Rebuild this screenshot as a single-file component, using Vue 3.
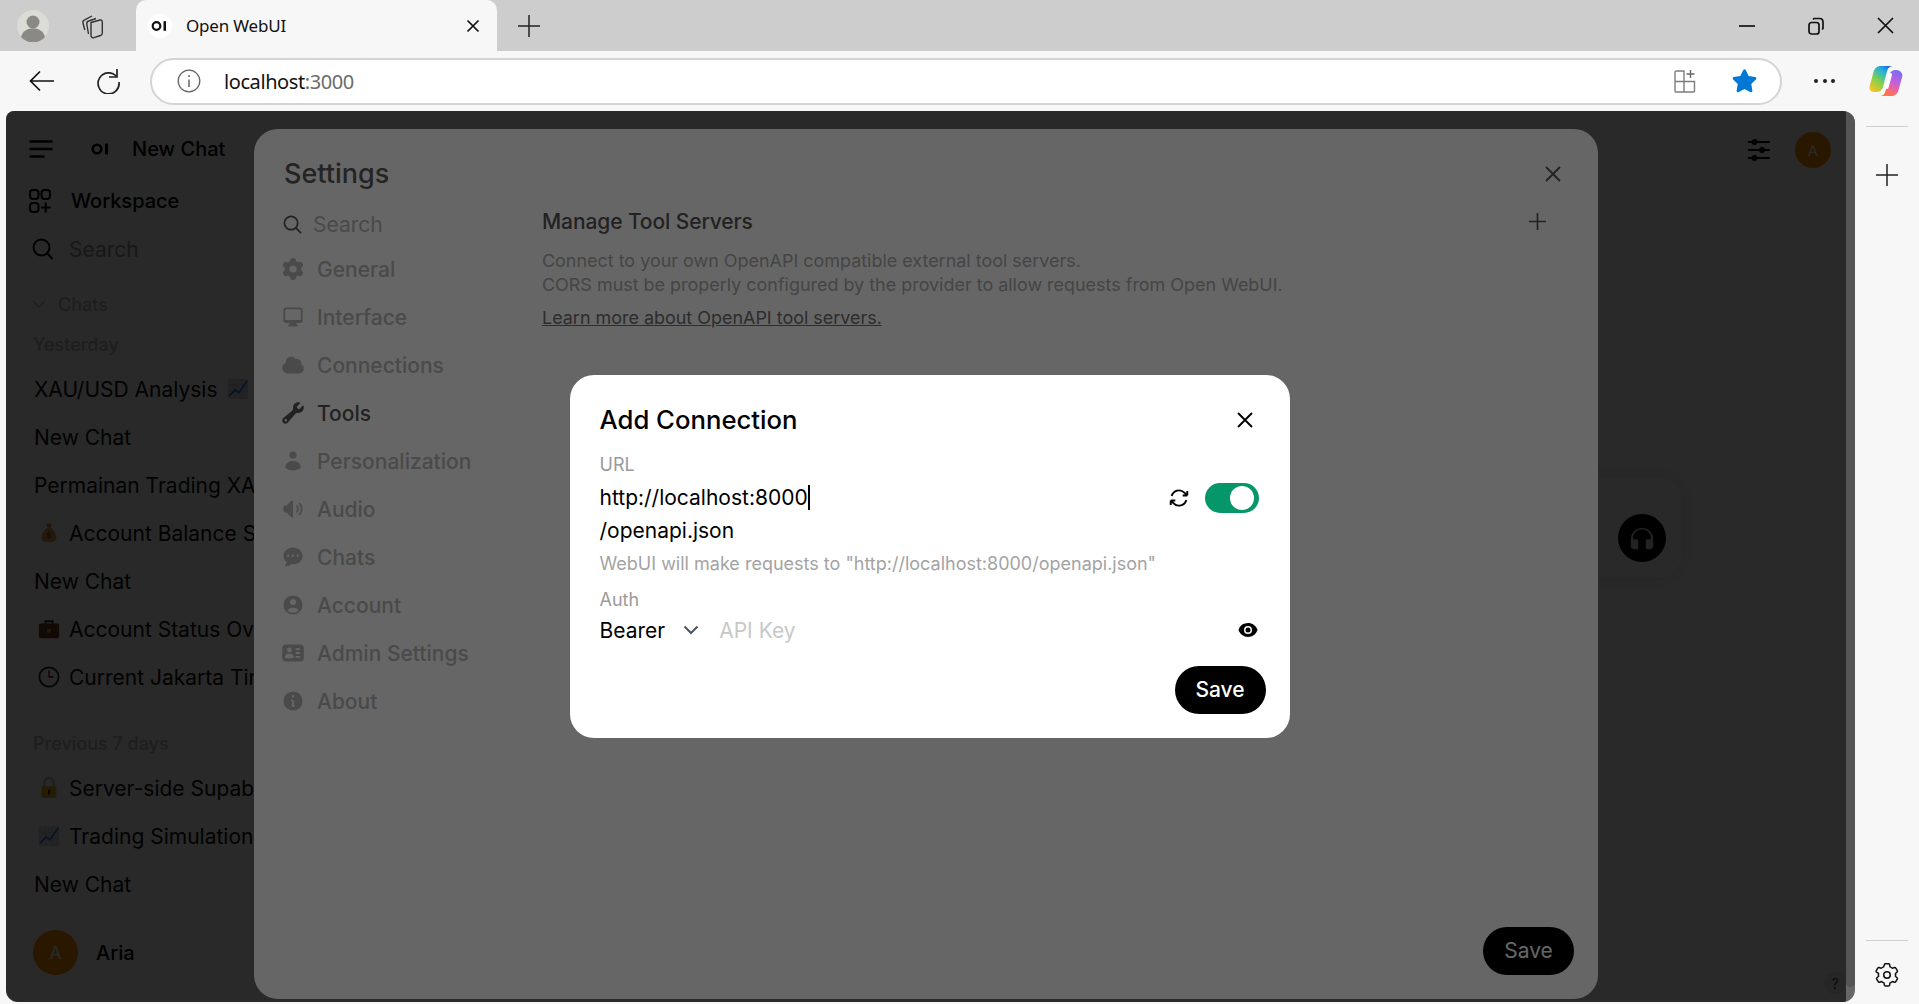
<script setup>
const nav = [
  { label: 'General', d: 'M7.84 1.804A1 1 0 0 1 8.82 1h2.36a1 1 0 0 1 .98.804l.331 1.652a6.993 6.993 0 0 1 1.929 1.115l1.598-.54a1 1 0 0 1 1.186.447l1.18 2.044a1 1 0 0 1-.205 1.251l-1.267 1.113a7.047 7.047 0 0 1 0 2.228l1.267 1.113a1 1 0 0 1 .206 1.25l-1.18 2.045a1 1 0 0 1-1.187.447l-1.598-.54a6.993 6.993 0 0 1-1.929 1.115l-.33 1.652a1 1 0 0 1-.98.804H8.82a1 1 0 0 1-.98-.804l-.331-1.652a6.993 6.993 0 0 1-1.929-1.115l-1.598.54a1 1 0 0 1-1.186-.447l-1.18-2.044a1 1 0 0 1 .205-1.251l1.267-1.114a7.05 7.05 0 0 1 0-2.227L1.821 7.773a1 1 0 0 1-.206-1.25l1.18-2.045a1 1 0 0 1 1.187-.447l1.598.54A6.992 6.992 0 0 1 7.51 3.456l.33-1.652ZM10 13a3 3 0 1 0 0-6 3 3 0 0 0 0 6Z' },
  { label: 'Interface', d: 'M2 4.25A2.25 2.25 0 0 1 4.25 2h11.5A2.25 2.25 0 0 1 18 4.25v8.5A2.25 2.25 0 0 1 15.75 15h-3.105a3.501 3.501 0 0 0 1.1 1.677A.75.75 0 0 1 13.26 18H6.74a.75.75 0 0 1-.484-1.323A3.501 3.501 0 0 0 7.355 15H4.25A2.25 2.25 0 0 1 2 12.75v-8.5Zm1.5 0a.75.75 0 0 1 .75-.75h11.5a.75.75 0 0 1 .75.75v7.5a.75.75 0 0 1-.75.75H4.25a.75.75 0 0 1-.75-.75v-7.5Z' },
  { label: 'Connections', d: 'M1 12.5A4.5 4.5 0 0 0 5.5 17H15a4 4 0 0 0 1.866-7.539 3.504 3.504 0 0 0-4.504-4.272A4.5 4.5 0 0 0 4.06 8.235 4.502 4.502 0 0 0 1 12.5Z' },
  { label: 'Tools', active: true, d: 'M19 5.5a4.5 4.5 0 0 1-4.791 4.49c-.873-.055-1.808.128-2.368.8l-6.024 7.23a2.724 2.724 0 1 1-3.837-3.837L9.21 8.16c.672-.56.855-1.495.8-2.368a4.5 4.5 0 0 1 5.873-4.575c.324.105.39.51.15.752L13.34 4.66a.455.455 0 0 0-.11.494 3.01 3.01 0 0 0 1.617 1.617c.17.07.363.02.493-.111l2.692-2.692c.241-.241.647-.174.752.15.14.435.216.9.216 1.382ZM4 17a1 1 0 1 0 0-2 1 1 0 0 0 0 2Z' },
  { label: 'Personalization', d: 'M10 8a3 3 0 1 0 0-6 3 3 0 0 0 0 6ZM3.465 14.493a1.23 1.23 0 0 0 .41 1.412A9.957 9.957 0 0 0 10 18c2.31 0 4.438-.784 6.131-2.1.43-.333.604-.903.408-1.41a7.002 7.002 0 0 0-13.074.003Z' },
  { label: 'Audio', d: 'M10 3.75a.75.75 0 0 0-1.264-.546L4.703 7H3.167a.75.75 0 0 0-.7.48A6.985 6.985 0 0 0 2 10c0 .887.165 1.737.468 2.52.111.29.39.48.7.48h1.535l4.033 3.796A.75.75 0 0 0 10 16.25V3.75ZM15.95 5.05a.75.75 0 0 0-1.06 1.061 5.5 5.5 0 0 1 0 7.778.75.75 0 0 0 1.06 1.06 7 7 0 0 0 0-9.899Z M13.829 7.172a.75.75 0 0 0-1.061 1.06 2.5 2.5 0 0 1 0 3.536.75.75 0 0 0 1.06 1.06 4 4 0 0 0 0-5.656Z' },
  { label: 'Chats', d: 'M10 2c-4.418 0-8 3.134-8 7 0 2.104 1.08 3.985 2.753 5.27a6.2 6.2 0 0 1-1.13 2.2.75.75 0 0 0 .62 1.2c1.7-.08 3.2-.7 4.4-1.7.44.07.9.1 1.36.1 4.418 0 8-3.134 8-7s-3.582-7-8-7ZM6 8a1 1 0 1 0 0 2a1 1 0 1 0 0-2ZM10 8a1 1 0 1 0 0 2a1 1 0 1 0 0-2ZM14 8a1 1 0 1 0 0 2a1 1 0 1 0 0-2Z' },
  { label: 'Account', d: 'M18 10a8 8 0 1 1-16 0 8 8 0 0 1 16 0Zm-5.5-2.5a2.5 2.5 0 1 1-5 0 2.5 2.5 0 0 1 5 0ZM10 12a5.99 5.99 0 0 0-4.793 2.39A6.483 6.483 0 0 0 10 16.5a6.483 6.483 0 0 0 4.793-2.11A5.99 5.99 0 0 0 10 12Z' },
  { label: 'Admin Settings', d: 'M1 6a3 3 0 0 1 3-3h12a3 3 0 0 1 3 3v8a3 3 0 0 1-3 3H4a3 3 0 0 1-3-3V6Zm4 1.5a2 2 0 1 1 4 0 2 2 0 0 1-4 0Zm2 3a4 4 0 0 0-3.665 2.395.75.75 0 0 0 .416 1A8.98 8.98 0 0 0 7 14.5a8.98 8.98 0 0 0 3.249-.604.75.75 0 0 0 .416-1.001A4.001 4.001 0 0 0 7 10.5Zm5-3.75a.75.75 0 0 1 .75-.75h2.5a.75.75 0 0 1 0 1.5h-2.5a.75.75 0 0 1-.75-.75Zm0 6.5a.75.75 0 0 1 .75-.75h2.5a.75.75 0 0 1 0 1.5h-2.5a.75.75 0 0 1-.75-.75Zm.75-4a.75.75 0 0 0 0 1.5h2.5a.75.75 0 0 0 0-1.5h-2.5Z' },
  { label: 'About', d: 'M18 10a8 8 0 1 1-16 0 8 8 0 0 1 16 0Zm-7-4a1 1 0 1 1-2 0 1 1 0 0 1 2 0ZM9 9a.75.75 0 0 0 0 1.5h.253a.25.25 0 0 1 .244.304l-.459 2.066A1.75 1.75 0 0 0 10.747 15H11a.75.75 0 0 0 0-1.5h-.253a.25.25 0 0 1-.244-.304l.459-2.066A1.75 1.75 0 0 0 9.253 9H9Z' },
]
const yesterday = [
  { t: 'XAU/USD Analysis', after: 'chart' },
  { t: 'New Chat' },
  { t: 'Permainan Trading XAU/USD' },
  { t: 'Account Balance Summary', e: 'bag' },
  { t: 'New Chat' },
  { t: 'Account Status Overview', e: 'case' },
  { t: 'Current Jakarta Time', e: 'clock' },
]
const week = [
  { t: 'Server-side Supabase Auth', e: 'lock' },
  { t: 'Trading Simulation Setup', e: 'chart' },
  { t: 'New Chat' },
]
</script>

<template>
  <div class="browser">
    <header class="tabstrip">
      <div class="profile">
        <svg width="32" height="32" viewBox="0 0 32 32"><circle cx="16" cy="16" r="16" fill="#dcdcd6"/><circle cx="16" cy="12" r="6.5" fill="#8b8985"/><path d="M4 27c2-7 7-8.500 12-8.500S26 20 28 27a16 16 0 0 1-24 0Z" fill="#8b8985"/></svg>
      </div>
      <div class="collections">
        <svg width="26" height="26" viewBox="0 0 26 26" fill="none" stroke="#333" stroke-width="1.400"><path d="M11 9.500 20 7c1.300-.3 2.300.5 2.300 1.800V20c0 1.200-.7 2.100-1.800 2.500L14 24.700c-1.500.5-3-.5-3-2.100V9.500Z"/><path d="M8.500 21 6.800 11c-.2-1.500.5-2.600 1.900-3L16 5.500"/><path d="M4.800 17 3 10c-.4-1.500.3-2.700 1.700-3.200L12 3"/></svg>
      </div>
      <div class="tab">
        <span class="favicon">
          <svg width="18" height="10" viewBox="0 0 18 10"><circle cx="5.500" cy="5" r="3.800" fill="none" stroke="#111" stroke-width="2.200"/><rect x="12.500" y="0.200" width="2.500" height="9.600" fill="#111"/></svg>
        </span>
        <span class="tab-title">Open WebUI</span>
        <svg class="tab-x" width="14" height="14" viewBox="0 0 14 14" stroke="#111" stroke-width="1.700"><path d="M1.500 1.500l11 11M12.500 1.500l-11 11"/></svg>
      </div>
      <svg class="new-tab" width="22" height="22" viewBox="0 0 22 22" stroke="#222" stroke-width="1.500"><path d="M11 0v22M0 11h22"/></svg>
      <div class="winbtns">
        <svg width="16" height="16" viewBox="0 0 16 16" stroke="#111" stroke-width="1.700"><path d="M0 8h16"/></svg>
        <svg width="16" height="18" viewBox="0 0 16 18" fill="none" stroke="#111" stroke-width="1.700"><rect x="1" y="5.500" width="10" height="11.500" rx="2.500"/><path d="M5 2.500 6 1.500h5.500c2 0 3.500 1.500 3.500 3.500v6.500l-1 1"/></svg>
        <svg width="17" height="17" viewBox="0 0 17 17" stroke="#111" stroke-width="1.700"><path d="M1 1l15 15M16 1L1 16"/></svg>
      </div>
    </header>

    <div class="toolbar">
      <svg class="tool-back" width="26" height="22" viewBox="0 0 26 22" fill="none" stroke="#111" stroke-width="1.700"><path d="M25 11H2M11 1.500 1.500 11l9.500 9.500"/></svg>
      <svg class="tool-reload" width="26" height="26" viewBox="0 0 26 26" fill="none" stroke="#222" stroke-width="1.700"><path d="M21.500 8.500A10.500 10.500 0 1 0 24 14"/><path d="M22 1v8h-8"/></svg>
      <div class="omnibox">
        <svg class="info" width="24" height="24" viewBox="0 0 24 24" fill="none" stroke="#666" stroke-width="1.300"><circle cx="12" cy="12" r="10.800"/><path d="M12 10.500v7.500" stroke-width="1.500"/><circle cx="12" cy="7" r="1" fill="#666" stroke="none"/></svg>
        <span class="addr">localhost<span class="addr-dim">:3000</span></span>
        <svg class="apps" width="24" height="24" viewBox="0 0 24 24" fill="none" stroke="#7d7d7d" stroke-width="1.400"><path d="M11 2H3.500A1.500 1.500 0 0 0 2 3.500V22a1 1 0 0 0 1 1h17.500a1 1 0 0 0 1-1V12.500H11V2ZM11 12.500V23M2 12.500h9"/><path d="M17.500 1v8M13.500 5h8" stroke="#666"/></svg>
        <svg class="star" width="27" height="27" viewBox="0 0 24 24" fill="#0078d4"><path d="M10.800 1.900c.5-1 1.900-1 2.400 0l2.500 5.200 5.700.8c1.100.2 1.500 1.500.7 2.300l-4.100 4 1 5.700c.2 1.100-1 2-2 1.400L12 18.600l-5 2.700c-1 .6-2.200-.3-2-1.400l1-5.700-4.100-4c-.8-.8-.4-2.100.7-2.300l5.700-.8 2.500-5.200Z"/></svg>
      </div>
      <div class="more"><i></i><i></i><i></i></div>
      <svg class="copilot" width="34" height="32" viewBox="0 0 34 32">
        <defs>
          <linearGradient id="cpa" x1="0.850" y1="0" x2="0.150" y2="1"><stop offset="0" stop-color="#1b5fd8"/><stop offset=".25" stop-color="#1fb0e0"/><stop offset=".6" stop-color="#7fd04f"/><stop offset="1" stop-color="#ffc31f"/></linearGradient>
          <linearGradient id="cpb" x1="0.700" y1="0" x2="0.300" y2="1"><stop offset="0" stop-color="#7c6cf0"/><stop offset=".4" stop-color="#c060e0"/><stop offset=".72" stop-color="#f5648f"/><stop offset="1" stop-color="#ff7a2e"/></linearGradient>
        </defs>
        <path d="M12 1H24C20 1 18.500 4 17.500 8L14 22C13 26 10 27 7 27H5C2 27 0 24.500 .6 21.500L4.500 7C5.500 3 8.500 1 12 1Z" fill="url(#cpa)"/>
        <path d="M27.500 5C31 5 34 8 33.300 11.500L29.500 25C28.500 29 25.500 31 22 31H11C15 31 16 28 17 24L20.500 10C21 7 23 5 27.500 5Z" fill="url(#cpb)"/>
        <path d="M21.500 9.500 18 22.500" stroke="#fff" stroke-width="3" stroke-linecap="round"/>
      </svg>
    </div>

    <div class="body">
      <div class="panel">
        <div class="viewport">
          <aside class="sidebar">
            <div class="side-top">
              <svg width="24" height="20" viewBox="0 0 24 20" stroke="#050505" stroke-width="2.400" stroke-linecap="round"><path d="M1.500 2.500h21M1.500 10h21M1.500 17.500h13"/></svg>
              <svg class="side-logo" width="18" height="12" viewBox="0 0 18 12"><circle cx="6" cy="6" r="4.300" fill="none" stroke="#000" stroke-width="2.600"/><rect x="14" y="0.600" width="3" height="10.800"/></svg>
              <span class="side-new">New Chat</span>
            </div>
            <div class="side-work">
              <svg width="22" height="24" viewBox="0 0 22 24" fill="none" stroke="#050505" stroke-width="2"><rect x="1" y="1" width="8.500" height="9" rx="3"/><rect x="12.500" y="1" width="8.500" height="9" rx="3"/><rect x="1" y="14" width="8.500" height="9" rx="3"/><path d="M16.700 13.500v10M12 18.500h9.500"/></svg>
              <span>Workspace</span>
            </div>
            <div class="side-search">
              <svg width="22" height="22" viewBox="0 0 22 22" fill="none" stroke="#050505" stroke-width="2"><circle cx="9.500" cy="9.500" r="8"/><path d="M15.500 15.500l5 5.500"/></svg>
              <span>Search</span>
            </div>
            <div class="side-folder">
              <svg width="14" height="9" viewBox="0 0 14 9" fill="none" stroke="#bbb" stroke-width="1.400"><path d="M1 1l6 6 6-6"/></svg>
              <span>Chats</span>
            </div>
            <div class="side-group side-group-first">Yesterday</div>
            <div v-for="(c, i) in yesterday" :key="i" class="chat">
              <svg v-if="c.e === 'bag'" class="emoji" viewBox="0 0 24 24"><path d="M9 2h6l-1.500 4h-3L9 2Z" fill="#c58b3a"/><path d="M10 6h4c3 3 6 7 6 11 0 4-3 5-8 5s-8-1-8-5c0-4 3-8 6-11Z" fill="#d9a24c"/><path d="M14 12.500c-1-1-4-1-4 .7s4 1 4 2.800-3 1.700-4 .7M12 10.500v8.500" fill="none" stroke="#6b4a18" stroke-width=".9"/></svg>
              <svg v-else-if="c.e === 'case'" class="emoji" viewBox="0 0 24 24"><path d="M8 6V3.500h8V6" fill="none" stroke="#3a2516" stroke-width="2"/><rect x="1" y="6" width="22" height="16" rx="2" fill="#6b3f1f"/><rect x="10" y="12" width="4" height="4" fill="#e0a030"/></svg>
              <svg v-else-if="c.e === 'clock'" class="emoji" viewBox="0 0 24 24"><circle cx="12" cy="12" r="10.500" fill="#fff" stroke="#222" stroke-width="2"/><path d="M12 5v7" fill="none" stroke="#c02020" stroke-width="1.800"/><path d="M12 12h5" fill="none" stroke="#222" stroke-width="1.800"/></svg>
              <span>{{ c.t }}</span>
              <svg v-if="c.after === 'chart'" class="emoji emoji-after" viewBox="0 0 24 24"><rect x="1" y="1" width="22" height="22" rx="1.500" fill="#dcdff0"/><path d="M1 8h22M1 15h22M8 1v22M16 1v22" stroke="#b8bdd4" stroke-width=".8"/><path d="M2 20l7-7 4 3 9-13" fill="none" stroke="#2a88e0" stroke-width="2"/></svg>
            </div>
            <div class="side-group side-group-week">Previous 7 days</div>
            <div v-for="(c, i) in week" :key="i" class="chat">
              <svg v-if="c.e === 'lock'" class="emoji" viewBox="0 0 24 24"><path d="M7 11V6a5 5 0 0 1 10 0v5" fill="none" stroke="#bbb" stroke-width="2.200"/><rect x="4" y="10" width="16" height="13" rx="1.500" fill="#e8b020"/><rect x="11" y="14" width="2.200" height="5" fill="#222"/></svg>
              <svg v-else-if="c.e === 'chart'" class="emoji" viewBox="0 0 24 24"><rect x="1" y="1" width="22" height="22" rx="1.500" fill="#dcdff0"/><path d="M1 8h22M1 15h22M8 1v22M16 1v22" stroke="#b8bdd4" stroke-width=".8"/><path d="M2 20l7-7 4 3 9-13" fill="none" stroke="#2a88e0" stroke-width="2"/></svg>
              <span>{{ c.t }}</span>
            </div>
            <div class="side-user">
              <span class="avatar avatar-lg">A</span>
              <span>Aria</span>
            </div>
          </aside>

          <main class="chatmain">
            <div class="chat-head">
              <svg width="24" height="22" viewBox="0 0 24 22" stroke="#0a0a0a" stroke-width="1.900" fill="#0a0a0a"><path d="M1 3h22M1 11h22M1 19h22" fill="none"/><circle cx="7.500" cy="3" r="2"/><circle cx="15" cy="11" r="2"/><circle cx="7.500" cy="19" r="2"/></svg>
              <span class="avatar avatar-sm">A</span>
            </div>
            <div class="call-card"></div>
          </main>

          <div class="help">?</div>

          <div class="backdrop backdrop-settings">
            <div class="call-btn">
              <svg width="30" height="30" viewBox="0 0 24 24" fill="#555"><path d="M12 5a7 7 0 0 0-7 7v1.170c.313-.11.65-.17 1-.17h2a1 1 0 0 1 1 1v6a1 1 0 0 1-1 1H6a3 3 0 0 1-3-3v-5a9 9 0 0 1 18 0v5a3 3 0 0 1-3 3h-2a1 1 0 0 1-1-1v-6a1 1 0 0 1 1-1h2c.35 0 .687.06 1 .17V12a7 7 0 0 0-7-7Z"/></svg>
            </div>
            <section class="settings">
              <div class="settings-head">
                <h2>Settings</h2>
                <svg width="16" height="16" viewBox="0 0 16 16" stroke="#555" stroke-width="1.800"><path d="M1 1l14 14M15 1L1 15"/></svg>
              </div>
              <div class="settings-body">
                <nav class="settings-nav">
                  <div class="nav-search">
                    <svg width="19" height="19" viewBox="0 0 20 20" fill="none" stroke="#555" stroke-width="1.800"><circle cx="8.500" cy="8.500" r="7"/><path d="M13.500 13.500l5.500 5.500"/></svg>
                    <span>Search</span>
                  </div>
                  <div v-for="n in nav" :key="n.label" class="nav-item" :class="{ active: n.active }">
                    <svg width="24" height="24" viewBox="0 0 20 20" fill="currentColor"><path fill-rule="evenodd" clip-rule="evenodd" :d="n.d"/></svg>
                    <span>{{ n.label }}</span>
                  </div>
                </nav>
                <div class="settings-content">
                  <div class="tools-title">
                    <span>Manage Tool Servers</span>
                    <svg width="17" height="17" viewBox="0 0 17 17" stroke="#555" stroke-width="1.700"><path d="M8.500 0v17M0 8.500h17"/></svg>
                  </div>
                  <p class="tools-desc">Connect to your own OpenAPI compatible external tool servers.<br>CORS must be properly configured by the provider to allow requests from Open WebUI.</p>
                  <a class="tools-link">Learn more about OpenAPI tool servers.</a>
                  <button class="save save-settings">Save</button>
                </div>
              </div>
            </section>
          </div>
        </div>

        <div class="scrolltrack"><div class="scrollthumb"></div></div>

        <div class="backdrop backdrop-add">
          <section class="dialog">
            <div class="dialog-head">
              <h3>Add Connection</h3>
              <svg width="16" height="16" viewBox="0 0 16 16" stroke="#000" stroke-width="1.900"><path d="M1 1l14 14M15 1L1 15"/></svg>
            </div>
            <div class="lbl lbl-url">URL</div>
            <div class="url-row">
              <span class="url-val">http://localhost:8000<span class="caret"></span></span>
              <svg class="sync" width="22" height="22" viewBox="0 0 24 24" fill="none" stroke="#000" stroke-width="2.100"><path d="M16.023 9.348h4.992M2.985 19.644v-4.992m0 0h4.992m-4.993 0 3.181 3.183a8.250 8.250 0 0 0 13.803-3.700M4.031 9.865a8.250 8.250 0 0 1 13.803-3.700l3.181 3.182m0-4.991v4.990"/></svg>
              <span class="toggle"><span class="knob"></span></span>
            </div>
            <div class="url-path">/openapi.json</div>
            <div class="hint">WebUI will make requests to "http://localhost:8000/openapi.json"</div>
            <div class="lbl lbl-auth">Auth</div>
            <div class="auth-row">
              <span class="auth-sel">Bearer</span>
              <svg class="auth-chev" width="16" height="10" viewBox="0 0 16 10" fill="none" stroke="#4b5563" stroke-width="2"><path d="M1.500 1.500 8 8l6.500-6.500"/></svg>
              <span class="auth-key">API Key</span>
              <svg class="eye" width="20" height="20" viewBox="0 0 20 20" fill="#000"><path d="M10 12.500a2.500 2.500 0 1 0 0-5 2.500 2.500 0 0 0 0 5Z"/><path fill-rule="evenodd" clip-rule="evenodd" d="M.664 10.590a1.651 1.651 0 0 1 0-1.186A10.004 10.004 0 0 1 10 3c4.257 0 7.893 2.660 9.336 6.410.147.381.146.804 0 1.186A10.004 10.004 0 0 1 10 17c-4.257 0-7.893-2.660-9.336-6.410ZM14 10a4 4 0 1 1-8 0 4 4 0 0 1 8 0Z"/></svg>
            </div>
            <div class="dialog-foot"><button class="save">Save</button></div>
          </section>
        </div>
      </div>

      <aside class="rail">
        <div class="rail-top">
          <div class="rail-line"></div>
          <svg width="22" height="22" viewBox="0 0 22 22" stroke="#222" stroke-width="1.500"><path d="M11 0v22M0 11h22"/></svg>
        </div>
        <div class="rail-bottom">
          <div class="rail-line"></div>
          <svg width="26" height="26" viewBox="0 0 24 24" fill="none" stroke="#111" stroke-width="1.400" stroke-linejoin="round"><path d="M9.600 2.500a1 1 0 0 1 1-.8h2.800a1 1 0 0 1 1 .8l.4 2a7.500 7.500 0 0 1 2.200 1.300l1.900-.7a1 1 0 0 1 1.200.5l1.400 2.400a1 1 0 0 1-.2 1.300l-1.500 1.300a7.500 7.500 0 0 1 0 2.600l1.500 1.300a1 1 0 0 1 .2 1.300l-1.400 2.400a1 1 0 0 1-1.200.5l-1.900-.7a7.500 7.500 0 0 1-2.200 1.300l-.4 2a1 1 0 0 1-1 .8h-2.800a1 1 0 0 1-1-.8l-.4-2a7.500 7.500 0 0 1-2.200-1.300l-1.900.7a1 1 0 0 1-1.200-.5l-1.400-2.400a1 1 0 0 1 .2-1.300l1.500-1.300a7.500 7.500 0 0 1 0-2.600L2.300 9.300a1 1 0 0 1-.2-1.300l1.400-2.400a1 1 0 0 1 1.200-.5l1.900.7a7.500 7.500 0 0 1 2.200-1.300l.8-2Z"/><circle cx="12" cy="12" r="3"/></svg>
        </div>
      </aside>
    </div>
  </div>
</template>

<style>
html, body { margin: 0; padding: 0; background: #f7f7f7; overflow: hidden; }
</style>

<style scoped>
.browser { width: 1919px; height: 1004px; display: flex; flex-direction: column; background: #f7f7f7; font-family: Inter, "Noto Sans", sans-serif; color: #171717; overflow: hidden; }
h2, h3, p { margin: 0; font-weight: inherit; }
svg { display: block; flex: none; }

.tabstrip { height: 51px; flex: none; background: #cdcdcd; display: flex; align-items: center; }
.profile { margin-left: 17px; width: 32px; height: 32px; }
.collections { margin-left: 31px; width: 26px; height: 26px; }
.tab { margin-left: 30px; width: 361px; height: 51px; box-sizing: border-box; background: #f7f7f7; border-radius: 10px 10px 0 0; display: flex; align-items: center; padding-left: 12px; }
.favicon { width: 24px; height: 24px; border-radius: 50%; background: #fff; display: flex; align-items: center; justify-content: center; }
.tab-title { margin-left: 14px; font-family: "Noto Sans", sans-serif; font-size: 17px; color: #111; flex: 1; letter-spacing: -0.2px; }
.tab-x { margin-right: 17px; }
.new-tab { margin-left: 21px; }
.winbtns { margin-left: auto; display: flex; align-items: center; gap: 53px; padding-right: 25px; }

.toolbar { height: 60px; flex: none; display: flex; align-items: center; background: #f7f7f7; }
.tool-back { margin-left: 29px; }
.tool-reload { margin-left: 40px; }
.omnibox { margin-left: 29px; width: 1632px; height: 47px; box-sizing: border-box; border: 2px solid #d4d4d4; border-radius: 24px; background: #fff; display: flex; align-items: center; padding-left: 25px; }
.addr { margin-left: 23px; font-family: "Noto Sans", sans-serif; font-size: 20px; color: #111; letter-spacing: -0.42px; }
.addr-dim { color: #6b6b6b; }
.apps { margin-left: auto; }
.star { margin-left: 34px; margin-right: 22px; }
.more { margin-left: 32px; display: flex; gap: 4.5px; }
.more i { width: 4px; height: 4px; border-radius: 50%; background: #222; }
.copilot { margin-left: 34px; }

.body { flex: 1; display: flex; min-height: 0; }
.panel { position: relative; margin-left: 6px; width: 1849px; height: 891px; display: flex; border-radius: 8px 12px 12px 12px; overflow: hidden; background: #fff; }
.viewport { position: relative; flex: 1; display: flex; overflow: hidden; }
.scrolltrack { width: 9px; position: relative; z-index: 5; flex: none; background: transparent; }
.scrollthumb { height: 876px; background: #555; border-radius: 0 0 5px 5px; }

.sidebar { width: 340px; flex: none; background: #fff; box-sizing: border-box; white-space: nowrap; overflow: hidden; display: flex; flex-direction: column; font-size: 21px; color: #111; }
.side-top { display: flex; align-items: center; height: 26px; margin-top: 25px; padding-left: 23px; }
.side-logo { margin-left: 38px; }
.side-new { margin-left: 23px; font-size: 20px; font-weight: 500; color: #000; }
.side-work { display: flex; align-items: center; margin-top: 26px; padding-left: 23px; height: 26px; font-size: 20px; font-weight: 500; color: #000; }
.side-work span { margin-left: 20px; }
.side-search { display: flex; align-items: center; margin-top: 22px; padding-left: 26px; height: 26px; color: #999; }
.side-search span { margin-left: 15px; }
.side-folder { display: flex; align-items: center; margin-top: 30px; padding-left: 26px; height: 24px; color: #bbb; font-size: 18px; font-weight: 500; }
.side-folder span { margin-left: 12px; }
.side-group { padding-left: 27px; font-size: 18px; font-weight: 500; color: #bbb; height: 24px; line-height: 24px; }
.side-group-first { margin-top: 17px; }
.side-group-week { margin-top: 31px; }
.chat { height: 48px; display: flex; align-items: center; padding-left: 28px; font-size: 21px; color: #111; }
.side-group + .chat { margin-top: 8px; }
.side-group-week + .chat { margin-top: 8px; }
.emoji { width: 22px; height: 22px; margin-left: 4px; margin-right: 9px; }
.emoji-after { margin-left: 9px; margin-right: 0; }
.side-user { display: flex; align-items: center; margin-top: 22px; padding-left: 27px; font-size: 20px; font-weight: 500; color: #000; }
.side-user span:last-child { margin-left: 18px; }
.avatar { border-radius: 50%; background: #ff9200; color: #fff; display: flex; align-items: center; justify-content: center; }
.avatar-lg { width: 45px; height: 45px; font-size: 17px; }
.avatar-sm { width: 36px; height: 36px; font-size: 15px; }

.chatmain { flex: 1; min-width: 0; background: #fff; position: relative; }
.chat-head { display: flex; justify-content: flex-end; align-items: center; gap: 24px; padding: 21px 15px 0 0; }
.call-card { position: absolute; right: 164px; top: 366px; width: 400px; height: 101px; border-radius: 24px; background: #fff; box-shadow: 0 0 16px rgba(0, 0, 0, 0.08); }
.help { position: absolute; right: 0; bottom: 8px; width: 22px; height: 22px; border-radius: 50%; background: #eee; color: #444; font-size: 14px; display: flex; align-items: center; justify-content: center; }

.backdrop { position: absolute; inset: 0; background: rgba(0, 0, 0, 0.6); display: flex; justify-content: center; }
.backdrop-settings { align-items: flex-start; }
.backdrop-add { align-items: center; z-index: 4; }

.call-btn { position: absolute; left: 1612px; top: 403px; width: 48px; height: 48px; border-radius: 50%; background: #000; display: flex; align-items: center; justify-content: center; }

.settings { margin-top: 18px; width: 1344px; height: 870px; box-sizing: border-box; border-radius: 24px; background: #fff; display: flex; flex-direction: column; padding: 0 30px; color: #5a5a5a; position: relative; }
.settings-head { display: flex; align-items: center; justify-content: space-between; height: 44px; margin-top: 22px; padding-right: 7px; }
.settings-head h2 { font-size: 27px; font-weight: 500; color: #5a5a5a; }
.settings-head svg { margin-top: 2px; }
.settings-body { flex: 1; display: flex; min-height: 0; }
.settings-nav { width: 258px; flex: none; display: flex; flex-direction: column; font-size: 21px; font-weight: 500; color: #b8b8b8; }
.nav-search { display: flex; align-items: center; height: 32px; margin-top: 13px; margin-left: -1px; margin-bottom: 5px; font-weight: 400; }
.nav-search span { margin-left: 11px; }
.nav-item { display: flex; align-items: center; height: 48px; }
.nav-item span { margin-left: 12px; }
.nav-item.active { color: #555; }
.nav-item svg { margin-left: -3px; }
.settings-content { flex: 1; position: relative; display: flex; flex-direction: column; padding-top: 11px; }
.tools-title { display: flex; align-items: center; justify-content: space-between; font-size: 21px; font-weight: 500; color: #555; padding-right: 22px; height: 30px; }
.tools-title span { letter-spacing: -0.1px; }
.tools-desc { font-size: 17.95px; line-height: 24px; margin-top: 13px; color: #adadad; }
.tools-link { font-size: 17.95px; line-height: 24px; margin-top: 9px; color: #707070; text-decoration: underline; }
.save { border: 0; background: #000; color: #fff; font-family: Inter, sans-serif; font-size: 21px; font-weight: 500; height: 48px; width: 91px; border-radius: 24px; padding: 0 0 2px; }
.save-settings { position: absolute; right: -6px; bottom: 24px; font-weight: 400; }

.dialog { width: 720px; height: 363px; margin-right: 2px; box-sizing: border-box; background: #fff; border-radius: 24px; padding: 0 30px; display: flex; flex-direction: column; color: #000; }
.dialog-head { display: flex; align-items: center; justify-content: space-between; margin-top: 27px; height: 34px; padding-right: 7px; }
.dialog-head svg { margin-top: 2px; }
.dialog-head h3 { font-size: 25.7px; font-weight: 500; color: #000; }
.lbl { font-size: 18px; color: #9a9a9a; height: 24px; line-height: 24px; }
.lbl-url { margin-top: 17px; }
.url-row { display: flex; align-items: center; height: 33px; margin-top: 4px; font-size: 21px; }
.url-val { flex: 1; display: flex; align-items: center; }
.caret { width: 2px; height: 25px; background: #000; }
.sync { margin-right: 15px; }
.toggle { width: 54px; height: 30px; border-radius: 15px; background: #059669; display: flex; align-items: center; justify-content: flex-end; padding-right: 5px; box-sizing: border-box; margin-right: 1px; }
.knob { width: 24px; height: 24px; border-radius: 50%; background: #fff; }
.url-path { font-size: 21px; height: 33px; line-height: 33px; }
.hint { font-size: 18px; color: #a3a3a3; height: 33px; line-height: 33px; }
.lbl-auth { margin-top: 8px; }
.auth-row { display: flex; align-items: center; height: 36px; font-size: 21px; }
.auth-chev { margin-left: 18px; }
.auth-key { margin-left: 20px; color: #c8c8c8; }
.eye { margin-left: auto; margin-right: 2px; }
.dialog-foot { margin-top: auto; margin-bottom: 24px; display: flex; justify-content: flex-end; margin-right: -6px; }

.rail { flex: 1; display: flex; flex-direction: column; justify-content: space-between; align-items: center; padding-bottom: 16px; }
.rail-top { display: flex; flex-direction: column; align-items: center; padding-top: 15px; gap: 37px; }
.rail-bottom { display: flex; flex-direction: column; align-items: center; gap: 21px; }
.rail-line { width: 42px; height: 1px; background: #cfcfcf; }
</style>
